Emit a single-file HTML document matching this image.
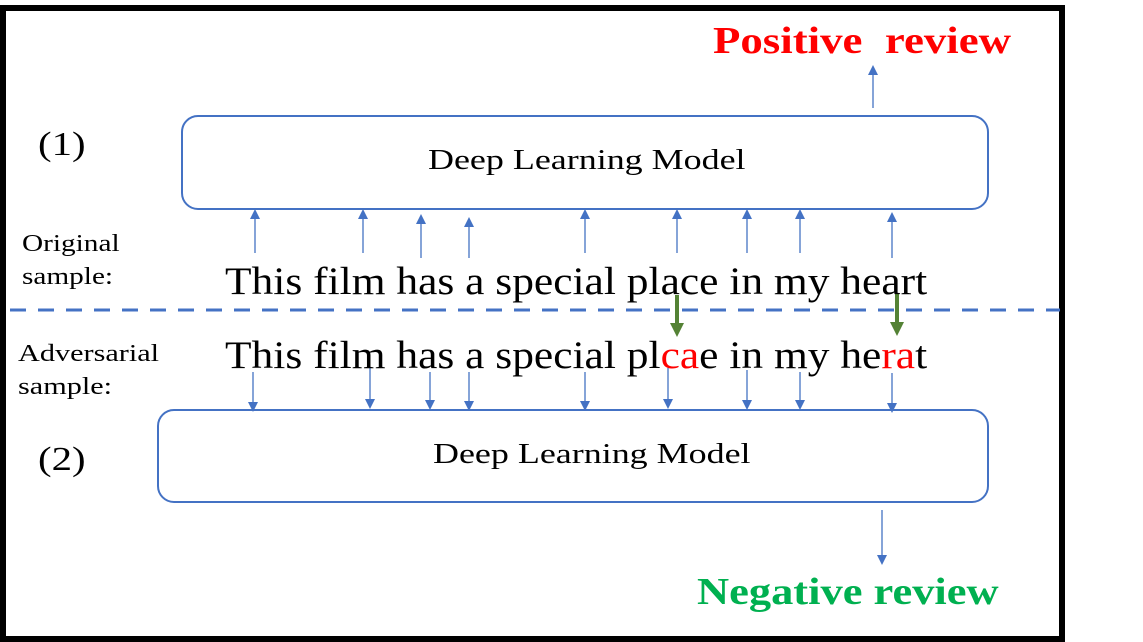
<!DOCTYPE html>
<html><head><style>
body{margin:0;width:1143px;height:642px;background:#fff;position:relative;overflow:hidden;font-family:"Liberation Serif",serif;}
.t{position:absolute;white-space:nowrap;line-height:1;transform-origin:0 0;}
</style></head><body>
<div style="position:absolute;left:0;top:5px;width:1053px;height:625px;border:6px solid #000;"></div>
<svg width="1143" height="642" style="position:absolute;left:0;top:0">
<defs>
<marker id="a" markerWidth="10" markerHeight="10" refX="5" refY="5" orient="auto" markerUnits="userSpaceOnUse"><path d="M0,0 L10,5 L0,10 z" fill="#4472c4"/></marker>
<marker id="g" markerWidth="14" markerHeight="14" refX="7" refY="7" orient="auto" markerUnits="userSpaceOnUse"><path d="M0,0 L14,7 L0,14 z" fill="#548235"/></marker>
</defs>
<line x1="10" y1="310" x2="1060" y2="310" stroke="#4472c4" stroke-width="3" stroke-dasharray="16 12"/>
<rect x="182" y="116" width="806" height="93" rx="16" fill="none" stroke="#4472c4" stroke-width="2"/>
<rect x="158" y="410" width="830" height="92" rx="16" fill="none" stroke="#4472c4" stroke-width="2"/>
<g stroke="#4472c4" stroke-width="1.3" marker-end="url(#a)">
<line x1="255" y1="253" x2="255" y2="214"/><line x1="363" y1="253" x2="363" y2="214"/><line x1="421" y1="258" x2="421" y2="219"/><line x1="469" y1="258" x2="469" y2="222"/><line x1="585" y1="253" x2="585" y2="214"/><line x1="677" y1="253" x2="677" y2="214"/><line x1="747" y1="253" x2="747" y2="214"/><line x1="800" y1="253" x2="800" y2="214"/><line x1="892" y1="258" x2="892" y2="217"/>
<line x1="873" y1="108" x2="873" y2="70"/>
<line x1="253" y1="372" x2="253" y2="407"/><line x1="370" y1="368" x2="370" y2="404"/><line x1="430" y1="372" x2="430" y2="405"/><line x1="469" y1="372" x2="469" y2="406"/><line x1="585" y1="372" x2="585" y2="406"/><line x1="668" y1="368" x2="668" y2="404"/><line x1="747" y1="370" x2="747" y2="405"/><line x1="800" y1="372" x2="800" y2="405"/><line x1="892" y1="373" x2="892" y2="408"/>
<line x1="882" y1="510" x2="882" y2="560"/>
</g>
<g stroke="#548235" stroke-width="4" marker-end="url(#g)">
<line x1="677" y1="295" x2="677" y2="330"/><line x1="897" y1="294" x2="897" y2="329"/>
</g>
</svg>
<div class="t" style="left:713px;top:22px;font-size:38px;font-weight:bold;color:#ff0000;transform:scaleX(1.18)">Positive&nbsp; review</div>
<div class="t" style="left:697px;top:573px;font-size:38px;font-weight:bold;color:#00b050;transform:scaleX(1.17)">Negative review</div>
<div class="t" style="left:428px;top:146px;font-size:29px;transform:scaleX(1.24)">Deep Learning Model</div>
<div class="t" style="left:433px;top:440px;font-size:29px;transform:scaleX(1.24)">Deep Learning Model</div>
<div class="t" style="left:38px;top:128px;font-size:34px;transform:scaleX(1.2)">(1)</div>
<div class="t" style="left:38px;top:443px;font-size:34px;transform:scaleX(1.2)">(2)</div>
<div class="t" style="left:22px;top:228px;font-size:24px;line-height:33px;transform:scaleX(1.22)">Original<br>sample:</div>
<div class="t" style="left:18px;top:338px;font-size:24px;line-height:33px;transform:scaleX(1.26)">Adversarial<br>sample:</div>
<div class="t" style="left:225px;top:262px;font-size:39px;transform:scaleX(1.114)">This film has a special place in my heart</div>
<div class="t" style="left:225px;top:336px;font-size:39px;transform:scaleX(1.114)">This film has a special pl<span style="color:#ff0000">ca</span>e in my he<span style="color:#ff0000">ra</span>t</div>
</body></html>
